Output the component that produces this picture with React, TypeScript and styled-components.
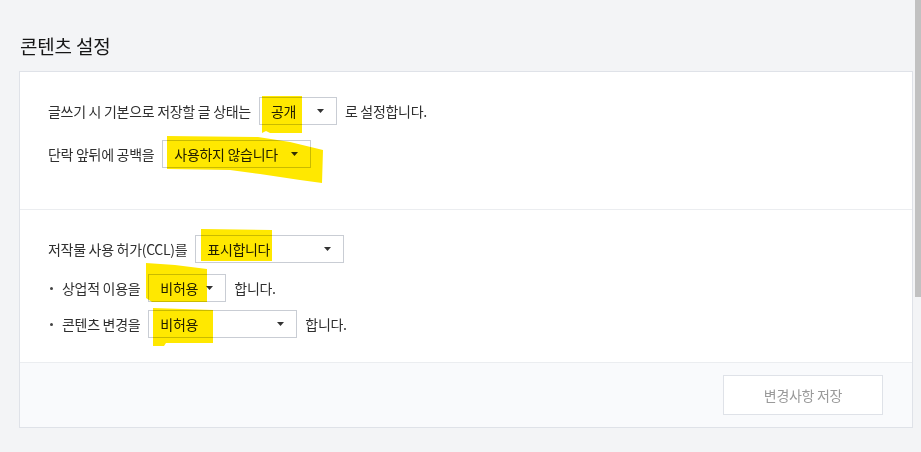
import React from "react";
import styled, { createGlobalStyle } from "styled-components";

const GlobalStyle = createGlobalStyle`
  html, body {
    margin: 0;
    padding: 0;
    background: #f3f4f6;
    overflow: hidden;
  }
  body {
    font-family: "Noto Sans CJK KR", "Noto Sans", sans-serif;
    color: #333;
  }
`;

const Page = styled.div`
  position: relative;
  height: 452px;
  box-sizing: border-box;
  padding: 0 8px 0 19px;
`;

const Title = styled.h2`
  margin: 0 0 11px;
  padding: 32px 0 0 1px;
  font-size: 19px;
  font-weight: 400;
  line-height: 28px;
  color: #161616;
  letter-spacing: -0.2px;
`;

const Card = styled.div`
  background: #fff;
  border: 1px solid #dfe2e8;
  display: flex;
  flex-direction: column;
`;

const Section = styled.div<{ $pt: number; $pb: number; $gap: number }>`
  display: flex;
  flex-direction: column;
  gap: ${(p) => p.$gap}px;
  padding: ${(p) => p.$pt}px 28px ${(p) => p.$pb}px;
  border-bottom: 1px solid #ebedf0;
`;

const List = styled.div`
  display: flex;
  flex-direction: column;
  gap: 8px;
  margin-top: 3px;
`;

const Row = styled.div`
  display: flex;
  align-items: center;
  gap: 8px;
  font-size: 14px;
  letter-spacing: -0.3px;
  color: #2f2f2f;
  line-height: 20px;
`;

const Label = styled.span`
  display: inline-flex;
  align-items: center;
  white-space: nowrap;
`;

const Bullet = styled.span`
  display: inline-flex;
  align-items: center;
  width: 14px;
  flex: none;
  &::before {
    content: "";
    width: 3px;
    height: 3px;
    border-radius: 50%;
    background: #444;
    margin-left: 2px;
  }
`;

const SelectBox = styled.div<{ $w: number }>`
  box-sizing: border-box;
  width: ${(p) => p.$w}px;
  height: 28px;
  border: 1px solid #c9cdd4;
  background: #fff;
  display: flex;
  align-items: center;
  justify-content: space-between;
  padding: 0 12px 0 11px;
  font-size: 14px;
  color: #222;
  white-space: nowrap;
  flex: none;
`;

const Footer = styled.div`
  background: #f9fafc;
  display: flex;
  justify-content: flex-end;
  padding: 12px 29px 12px;
`;

const SaveButton = styled.button`
  box-sizing: border-box;
  width: 160px;
  height: 40px;
  border: 1px solid #dfe2e8;
  background: #fff;
  color: #9a9a9a;
  font-family: "Noto Sans CJK KR", "Noto Sans", sans-serif;
  font-size: 14px;
  letter-spacing: -0.3px;
  cursor: default;
`;

const Highlights = styled.svg`
  position: absolute;
  left: 0;
  top: 0;
  width: 921px;
  height: 452px;
  pointer-events: none;
  mix-blend-mode: multiply;
`;

const ScrollThumb = styled.div`
  position: absolute;
  right: 0;
  top: 0;
  width: 6px;
  height: 297px;
  background: #c1c1c1;
`;

const Arrow = () => (
  <svg width="7" height="4" viewBox="0 0 7 4">
    <path d="M0 0H7L3.5 4Z" fill="#333" />
  </svg>
);

const Select = ({ w, value }: { w: number; value: string }) => (
  <SelectBox $w={w}>
    <span>{value}</span>
    <Arrow />
  </SelectBox>
);

export default function App() {
  return (
    <>
      <GlobalStyle />
      <Page>
        <Title>콘텐츠 설정</Title>
        <Card>
          <Section $pt={25} $pb={41} $gap={15}>
            <Row>
              <Label>글쓰기 시 기본으로 저장할 글 상태는</Label>
              <Select w={78} value="공개" />
              <Label>로 설정합니다.</Label>
            </Row>
            <Row>
              <Label>단락 앞뒤에 공백을</Label>
              <Select w={149} value="사용하지 않습니다" />
            </Row>
          </Section>
          <Section $pt={25} $pb={24} $gap={8}>
            <Row>
              <Label>저작물 사용 허가(CCL)를</Label>
              <Select w={149} value="표시합니다" />
            </Row>
            <List>
              <Row>
                <Label>
                  <Bullet />
                  상업적 이용을
                </Label>
                <Select w={78} value="비허용" />
                <Label>합니다.</Label>
              </Row>
              <Row>
                <Label>
                  <Bullet />
                  콘텐츠 변경을
                </Label>
                <Select w={149} value="비허용" />
                <Label>합니다.</Label>
              </Row>
            </List>
          </Section>
          <Footer>
            <SaveButton>변경사항 저장</SaveButton>
          </Footer>
        </Card>
        <Highlights viewBox="0 0 921 452">
          <g fill="#ffe800">
            <polygon points="262,96 302,96 302,133 270,133 266,131 262,133" />
            <polygon points="167,136 258,137 290,142 323,150 322,183 300,180 260,174 230,170 167,169" />
            <polygon points="201,229 272,230 272,261 201,261" />
            <polygon points="146,263 175,265 207,269 207,302 152,302 146,298" />
            <polygon points="153,308 213,310 213,343 166,343 164,346 153,346" />
          </g>
        </Highlights>
        <ScrollThumb />
      </Page>
    </>
  );
}
